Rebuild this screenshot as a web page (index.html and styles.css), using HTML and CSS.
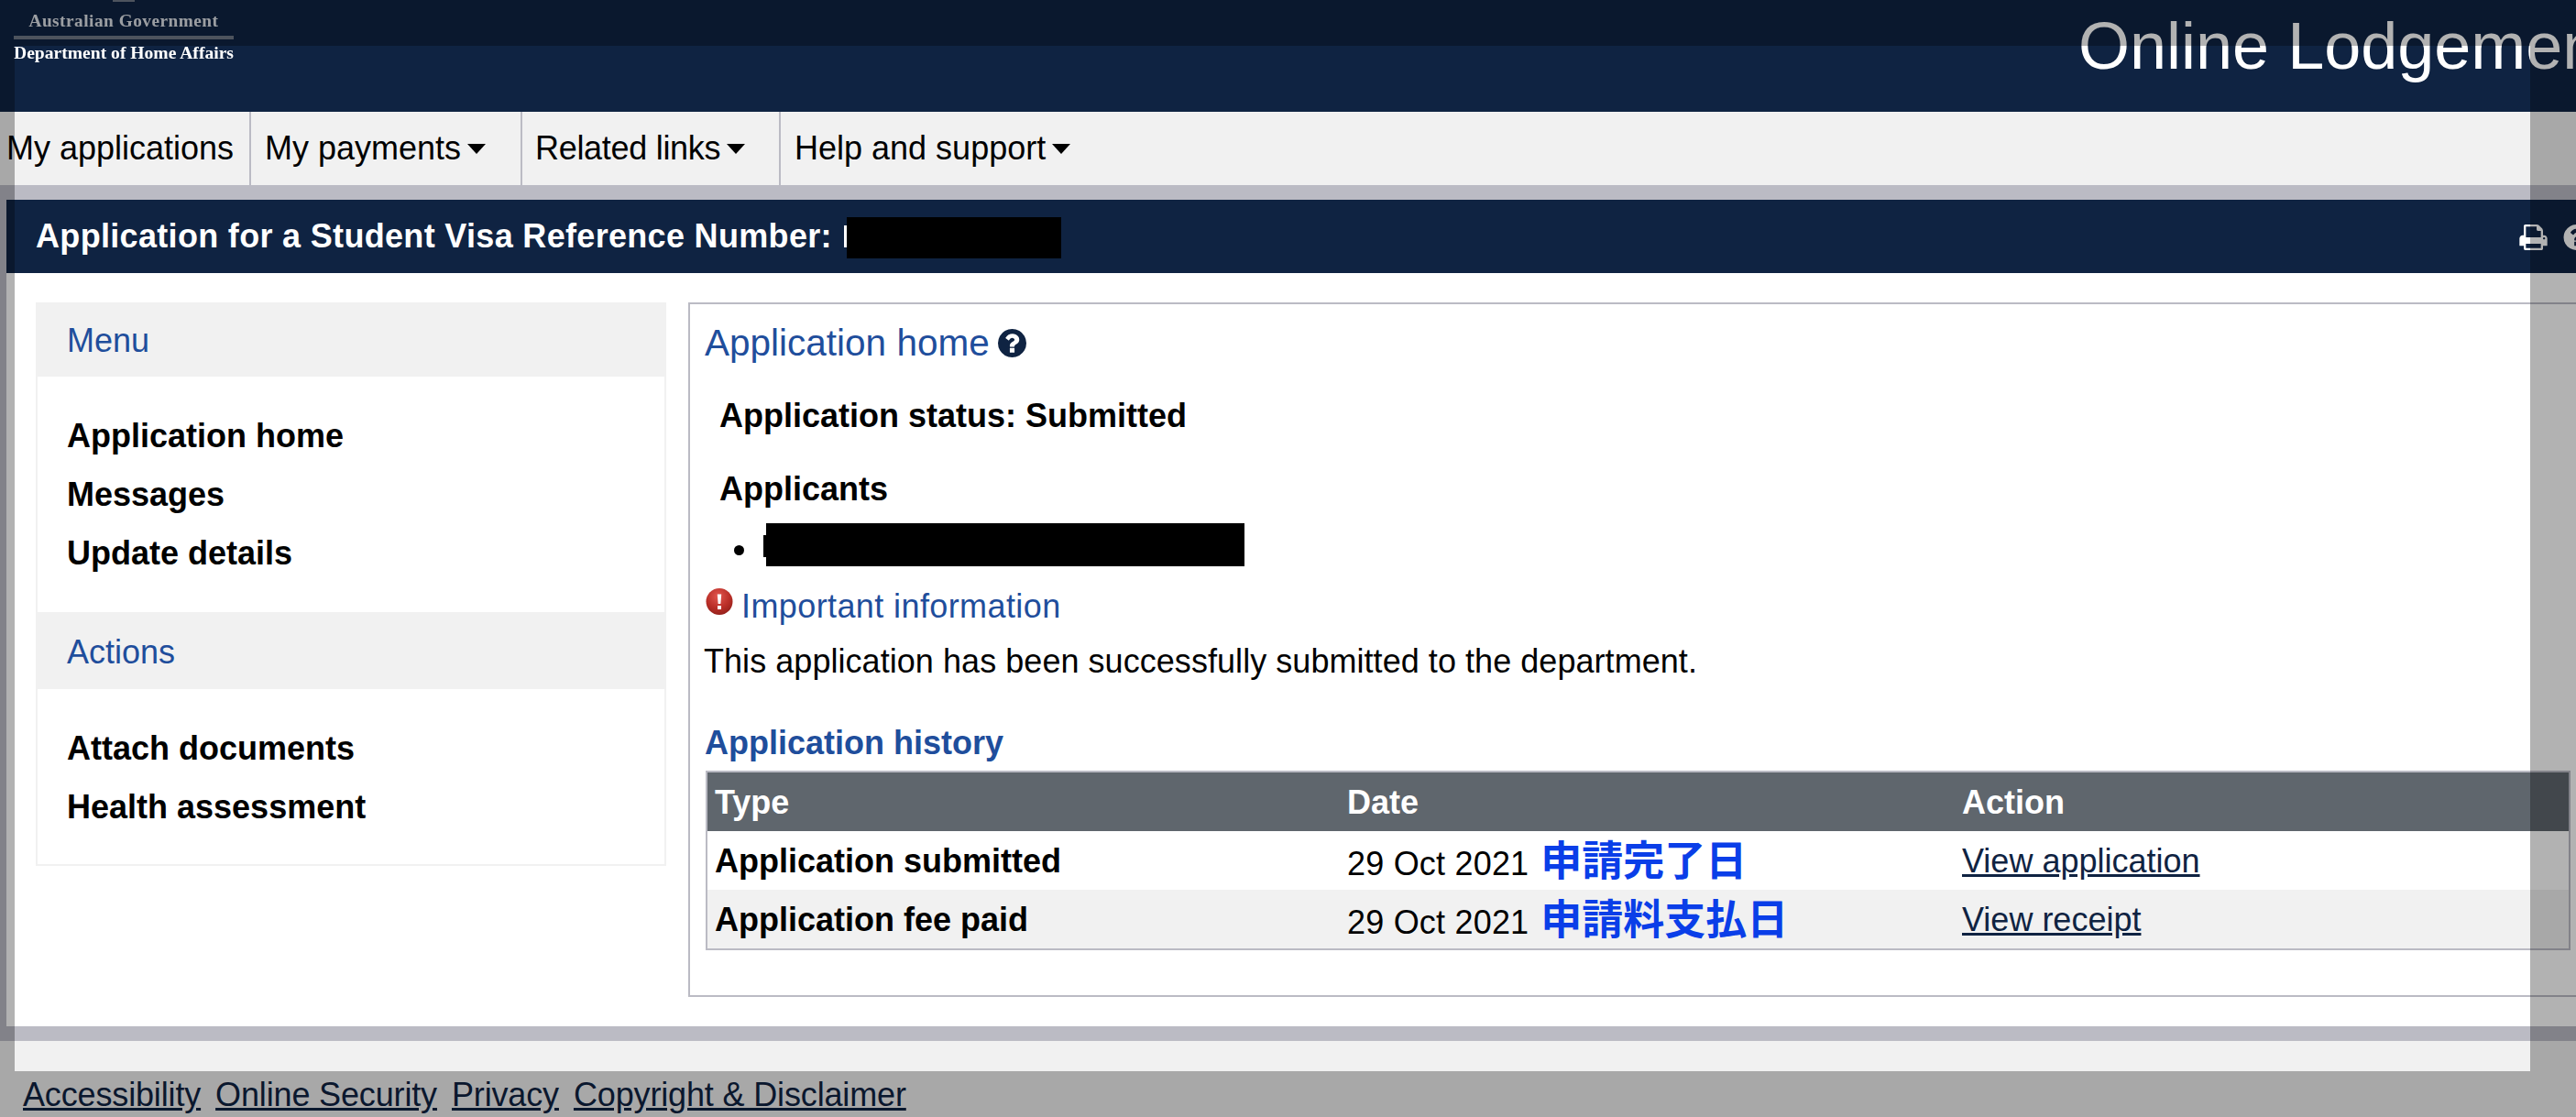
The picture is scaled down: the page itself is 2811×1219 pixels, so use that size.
FILE: index.html
```html
<!DOCTYPE html>
<html lang="en">
<head>
<meta charset="utf-8">
<title>Application for a Student Visa</title>
<link rel="stylesheet" href="styles.css">
</head>
<body>
<div class="page">
  <header class="header">
    <div class="logo">
      <div class="crest"></div>
      <div class="gov">Australian Government</div>
      <div class="dept">Department of Home Affairs</div>
    </div>
    <div class="site-title">Online Lodgement</div>
  </header>
  <nav class="nav">
    <a class="nav-item first">My applications</a>
    <a class="nav-item pay">My payments<i class="caret"></i></a>
    <a class="nav-item rel">Related links<i class="caret"></i></a>
    <a class="nav-item last">Help and support<i class="caret"></i></a>
  </nav>
  <div class="wrap">
    <div class="titlebar">
      <h1 class="app-title">Application for a Student Visa Reference Number:</h1>
      <span class="redact-stub"></span><span class="redact redact-title"></span>
      <div class="tools">
        <svg class="tool" viewBox="64 128 1664 1536"><path fill="#fff" d="M448 1536h896v-256h-896v256zm0-640h896v-384h-160q-40 0-68-28t-28-68v-160h-640v640zm1152 64q0-26-19-45t-45-19-45 19-19 45 19 45 45 19 45-19 19-45zm128 0v416q0 13-9.5 22.5t-22.5 9.5h-224v160q0 40-28 68t-68 28h-960q-40 0-68-28t-28-68v-160h-224q-13 0-22.5-9.5t-9.5-22.5v-416q0-79 56.5-135.5t135.5-56.5h64v-544q0-40 28-68t68-28h672q40 0 88 20t76 48l152 152q28 28 48 76t20 88v256h64q79 0 135.5 56.5t56.5 135.5z"/></svg>
        <svg class="tool" viewBox="128 128 1536 1536"><path fill="#fff" d="M1024 1376v-192q0-14-9-23t-23-9h-192q-14 0-23 9t-9 23v192q0 14 9 23t23 9h192q14 0 23-9t9-23zm256-672q0-88-55.5-163t-138.5-116-170-41q-243 0-371 213-15 24 8 42l132 100q7 6 19 6 16 0 25-12 53-68 86-92 34-24 86-24 48 0 85.5 26t37.5 59q0 38-20 61t-68 45q-63 28-115.5 86.5t-52.5 125.5v36q0 14 9 23t23 9h192q14 0 23-9t9-23q0-19 21.5-49.5t54.5-49.5q32-18 49-28.5t46-35 44.5-48 28-60.5 12.5-81zm384 192q0 209-103 385.5t-279.5 279.5-385.5 103-385.5-103-279.5-279.5-103-385.5 103-385.5 279.5-279.5 385.5-103 385.5 103 279.5 279.5 103 385.5z"/></svg>
      </div>
    </div>
    <div class="content">
      <aside class="sidebar">
        <div class="side-head">Menu</div>
        <ul class="side-list">
          <li>Application home</li>
          <li>Messages</li>
          <li>Update details</li>
        </ul>
        <div class="side-head side-head-2">Actions</div>
        <ul class="side-list side-list-2">
          <li>Attach documents</li>
          <li>Health assessment</li>
        </ul>
      </aside>
      <main class="panel">
        <h2 class="panel-head">Application home
          <svg class="help" viewBox="128 128 1536 1536"><path fill="#0f2342" d="M1024 1376v-192q0-14-9-23t-23-9h-192q-14 0-23 9t-9 23v192q0 14 9 23t23 9h192q14 0 23-9t9-23zm256-672q0-88-55.5-163t-138.5-116-170-41q-243 0-371 213-15 24 8 42l132 100q7 6 19 6 16 0 25-12 53-68 86-92 34-24 86-24 48 0 85.5 26t37.5 59q0 38-20 61t-68 45q-63 28-115.5 86.5t-52.5 125.5v36q0 14 9 23t23 9h192q14 0 23-9t9-23q0-19 21.5-49.5t54.5-49.5q32-18 49-28.5t46-35 44.5-48 28-60.5 12.5-81zm384 192q0 209-103 385.5t-279.5 279.5-385.5 103-385.5-103-279.5-279.5-103-385.5 103-385.5 279.5-279.5 385.5-103 385.5 103 279.5 279.5 103 385.5z"/></svg>
        </h2>
        <p class="status">Application status: Submitted</p>
        <p class="applicants">Applicants</p>
        <div class="applicant-row">
          <i class="bullet"></i><span class="redact-stub-dark"></span><span class="redact redact-name"></span>
        </div>
        <div class="important">
          <svg class="alert" viewBox="0 0 30 30">
            <defs><radialGradient id="red" cx="45%" cy="30%" r="75%"><stop offset="0" stop-color="#e2574f"/><stop offset=".6" stop-color="#b92e27"/><stop offset="1" stop-color="#8f1f1a"/></radialGradient></defs>
            <circle cx="15" cy="14.5" r="14.5" fill="url(#red)"/>
            <path fill="#fff" d="M12.800 6.500h4.400l-.8 10.500h-2.800zM13 19h4v4h-4z"/>
          </svg>
          <span>Important information</span>
        </div>
        <p class="notice">This application has been successfully submitted to the department.</p>
        <h3 class="history">Application history</h3>
        <table class="table">
          <colgroup><col class="c1"><col class="c2"><col class="c3"></colgroup>
          <thead>
            <tr><th>Type</th><th>Date</th><th>Action</th></tr>
          </thead>
          <tbody>
            <tr><td class="strong">Application submitted</td><td><span class="date">29 Oct 2021</span> <span class="jp">申請完了日</span></td><td><a class="link">View application</a></td></tr>
            <tr class="alt"><td class="strong">Application fee paid</td><td><span class="date">29 Oct 2021</span> <span class="jp">申請料支払日</span></td><td><a class="link">View receipt</a></td></tr>
          </tbody>
        </table>
      </main>
    </div>
  </div>
  <footer class="footer">
    <a class="link">Accessibility</a>
    <a class="link">Online Security</a>
    <a class="link">Privacy</a>
    <a class="link">Copyright &amp; Disclaimer</a>
  </footer>
  <div class="backdrop"></div>
</div>
</body>
</html>
```

FILE: styles.css
```css
* { box-sizing: border-box; }
html, body { margin: 0; padding: 0; height: 100%; overflow: hidden; }
body { font-family: "Liberation Sans", Arial, sans-serif; font-size: 36px; color: #000; background: #f1f1f1; }
.page { position: relative; width: 2811px; height: 1219px; overflow: hidden; background: #f1f1f1; }

.header { height: 122px; background: #0f2342; display: flex; color: #fff; }
.logo { width: 240px; margin-left: 15px; font-family: "Liberation Serif", serif; font-weight: 700; text-align: center; color: #fff; flex: none; filter: blur(.5px); }
.crest { width: 24px; height: 2px; margin: 0 auto; background: #6f7786; }
.gov { font-size: 19.3px; line-height: 20px; margin-top: 11px; padding-bottom: 6px; border-bottom: 4px solid #6f7786; color: #dfe2e8; letter-spacing: .5px; white-space: nowrap; }
.dept { font-size: 19.6px; line-height: 20px; margin-top: 5px; white-space: nowrap; }
.site-title { margin-left: 2013px; font-size: 72px; line-height: 100px; white-space: nowrap; }

.nav { height: 80px; display: flex; background: #f1f1f1; line-height: 80px; }
.nav-item { display: flex; align-items: center; padding: 0 16px; border-right: 2px solid #bbbbc4; white-space: nowrap; }
.nav-item.first { padding-left: 7px; width: 274px; }
.nav-item.pay { width: 296px; padding-left: 15px; }
.nav-item.rel { width: 282px; padding-left: 14px; letter-spacing: -.3px; }
.nav-item.last { border-right: 0; padding-left: 15px; }
.caret { width: 0; height: 0; margin-left: 7px; border-left: 10px solid transparent; border-right: 10px solid transparent; border-top: 11px solid #000; }

.wrap { height: 934px; background: #fff; border: 0 solid #bbbbc4; border-width: 16px 0; border-left-width: 7px; overflow: hidden; }
.titlebar { height: 80px; background: #0f2342; color: #fff; display: flex; align-items: center; padding-left: 32px; white-space: nowrap; position: relative; }
.app-title { margin: 0; font-size: 36px; font-weight: 700; letter-spacing: .32px; }
.redact { display: block; background: #000; flex: none; }
.redact-title { width: 234px; height: 45px; margin-top: 3px; }
.redact-stub { width: 3px; height: 24px; margin-left: 13px; background: #fff; }
.tools { display: flex; gap: 16px; position: absolute; left: 2742px; top: 27px; }
.tool { width: 31px; height: 28px; flex: none; }

.content { display: flex; align-items: flex-start; padding: 32px 0 0 32px; }
.sidebar { width: 688px; flex: none; }
.side-head { height: 81px; line-height: 84px; padding-left: 34px; background: #f1f1f1; color: #1f4e9c; font-size: 36px; }
.side-head-2 { height: 84px; line-height: 88px; }
.side-list { list-style: none; margin: 0; padding: 33px 0 32px 32px; height: 257px; border: 0 solid #f1f1f1; border-width: 0 2px; font-weight: 700; }
.side-list li { height: 64px; line-height: 64px; }
.side-list-2 { height: 193px; border-bottom-width: 2px; }

.panel { width: 2200px; height: 758px; flex: none; margin-left: 24px; border: 2px solid #bbbbc4; padding: 0 0 0 17px; }
.panel-head { margin: 0 0 0 -1px; height: 64px; padding-top: 21px; font-size: 40.5px; line-height: 43px; font-weight: 400; color: #1f4e9c; display: flex; align-items: center; gap: 9px; }
.help { width: 31px; height: 31px; flex: none; }
.status, .applicants { margin: 0 0 0 15px; font-weight: 700; line-height: 44px; }
.status { margin-top: 36px; }
.applicants { margin-top: 36px; }
.applicant-row { height: 47px; margin-top: 15px; display: flex; align-items: flex-start; }
.bullet { width: 11px; height: 11px; border-radius: 50%; background: #000; margin: 24px 0 0 31px; flex: none; }
.redact-stub-dark { width: 3px; height: 24px; margin: 13px 0 0 21px; background: #000; }
.redact-name { width: 522px; height: 47px; }
.important { display: flex; align-items: flex-start; gap: 9px; height: 50px; margin-top: 24px; color: #1f4e9c; line-height: 40px; letter-spacing: .4px; }
.alert { width: 30px; height: 30px; flex: none; }
.notice { margin: 8px 0 0 -2px; line-height: 44px; white-space: nowrap; letter-spacing: .05px; }
.history { margin: 45px 0 0 -1px; font-size: 36px; line-height: 44px; font-weight: 700; color: #1f4e9c; }

.table { border-collapse: separate; border-spacing: 0; table-layout: fixed; width: 2035px; margin-top: 8px; border: 2px solid #bbbbc4; }
.c1 { width: 690px; }
.c2 { width: 671px; }
.table th, .table td { height: 64px; padding: 2px 0 0 8px; line-height: 40px; text-align: left; white-space: nowrap; }
.table th { background: #5f666d; color: #fff; font-weight: 700; }
.alt td { background: #f1f1f1; }
.strong { font-weight: 700; }
.date { letter-spacing: .2px; }
.jp { font-family: "Noto Sans CJK JP", "Liberation Sans", sans-serif; font-size: 45px; font-weight: 700; color: #0a3ee8; vertical-align: -1px; line-height: 40px; margin-left: 3px; }
.link { color: #0f2342; text-decoration: underline; }

.footer { display: flex; gap: 16px; padding: 39px 0 0 25px; line-height: 40px; white-space: nowrap; letter-spacing: -.15px; }

.backdrop { position: absolute; left: 16px; top: 50px; width: 2745px; height: 1119px; box-shadow: 0 0 0 3000px rgba(0, 0, 0, .3); pointer-events: none; }
```
